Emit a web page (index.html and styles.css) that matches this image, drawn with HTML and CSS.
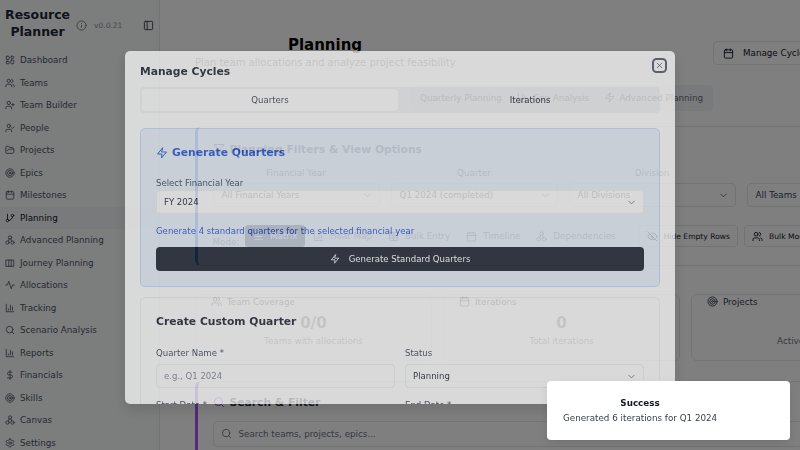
FILE: index.html
```html
<!DOCTYPE html>
<html lang="en">
<head>
<meta charset="utf-8">
<title>Resource Planner</title>
<link rel="stylesheet" href="styles.css">
</head>
<body>
<svg class="defs" xmlns="http://www.w3.org/2000/svg">
<symbol id="dash" viewBox="0 0 24 24"><rect x="3" y="3" width="7" height="8" rx="1.5"/><rect x="14" y="3" width="7" height="5" rx="1.5"/><rect x="14" y="12" width="7" height="9" rx="1.5"/><rect x="3" y="15" width="7" height="6" rx="1.5"/></symbol>
<symbol id="users" viewBox="0 0 24 24"><path d="M16 21v-2a4 4 0 0 0-4-4H6a4 4 0 0 0-4 4v2"/><circle cx="9" cy="7" r="4"/><path d="M22 21v-2a4 4 0 0 0-3-3.87"/><path d="M16 3.13a4 4 0 0 1 0 7.75"/></symbol>
<symbol id="uplus" viewBox="0 0 24 24"><path d="M16 21v-2a4 4 0 0 0-4-4H6a4 4 0 0 0-4 4v2"/><circle cx="9" cy="7" r="4"/><path d="M19 8v6M22 11h-6"/></symbol>
<symbol id="ucheck" viewBox="0 0 24 24"><path d="M16 21v-2a4 4 0 0 0-4-4H6a4 4 0 0 0-4 4v2"/><circle cx="9" cy="7" r="4"/><path d="m16 11 2 2 4-4"/></symbol>
<symbol id="folder" viewBox="0 0 24 24"><path d="m6 14 1.5-2.9A2 2 0 0 1 9.24 10H20a2 2 0 0 1 1.94 2.5l-1.54 6a2 2 0 0 1-1.95 1.5H4a2 2 0 0 1-2-2V5a2 2 0 0 1 2-2h3.9a2 2 0 0 1 1.69.9l.81 1.2a2 2 0 0 0 1.67.9H18a2 2 0 0 1 2 2v2"/></symbol>
<symbol id="target" viewBox="0 0 24 24"><circle cx="12" cy="12" r="10"/><circle cx="12" cy="12" r="6"/><circle cx="12" cy="12" r="2"/></symbol>
<symbol id="cal" viewBox="0 0 24 24"><rect x="3" y="4" width="18" height="18" rx="2"/><path d="M16 2v4M8 2v4M3 10h18"/></symbol>
<symbol id="branch" viewBox="0 0 24 24"><path d="M6 3v12"/><circle cx="18" cy="6" r="3"/><circle cx="6" cy="18" r="3"/><path d="M18 9a9 9 0 0 1-9 9"/></symbol>
<symbol id="net" viewBox="0 0 24 24"><circle cx="12" cy="6" r="4"/><circle cx="6" cy="18" r="4"/><circle cx="18" cy="18" r="4"/><path d="m10 9.500-2 5M14 9.500l2 5"/></symbol>
<symbol id="map" viewBox="0 0 24 24"><path d="M3 5h18v15H3zM9 5v15M15 5v15"/></symbol>
<symbol id="act" viewBox="0 0 24 24"><path d="M22 12h-4l-3 9L9 3l-3 9H2"/></symbol>
<symbol id="bars" viewBox="0 0 24 24"><path d="M3 3v18h18M18 17V9M13 17V5M8 17v-3"/></symbol>
<symbol id="search" viewBox="0 0 24 24"><circle cx="11" cy="11" r="8"/><path d="m21 21-4.300-4.300"/></symbol>
<symbol id="dollar" viewBox="0 0 24 24"><path d="M12 1v22M17 5H9.500a3.500 3.500 0 0 0 0 7h5a3.500 3.500 0 0 1 0 7H6"/></symbol>
<symbol id="gear" viewBox="0 0 24 24"><path d="M12.220 2h-.44a2 2 0 0 0-2 2v.18a2 2 0 0 1-1 1.730l-.43.250a2 2 0 0 1-2 0l-.15-.08a2 2 0 0 0-2.730.730l-.22.380a2 2 0 0 0 .730 2.730l.15.100a2 2 0 0 1 1 1.720v.510a2 2 0 0 1-1 1.740l-.15.090a2 2 0 0 0-.730 2.730l.22.380a2 2 0 0 0 2.730.730l.15-.08a2 2 0 0 1 2 0l.43.250a2 2 0 0 1 1 1.730V20a2 2 0 0 0 2 2h.44a2 2 0 0 0 2-2v-.18a2 2 0 0 1 1-1.730l.43-.25a2 2 0 0 1 2 0l.15.080a2 2 0 0 0 2.730-.730l.22-.390a2 2 0 0 0-.730-2.730l-.15-.08a2 2 0 0 1-1-1.740v-.5a2 2 0 0 1 1-1.740l.15-.09a2 2 0 0 0 .730-2.730l-.22-.38a2 2 0 0 0-2.730-.730l-.15.080a2 2 0 0 1-2 0l-.43-.25a2 2 0 0 1-1-1.730V4a2 2 0 0 0-2-2z"/><circle cx="12" cy="12" r="3"/></symbol>
<symbol id="info" viewBox="0 0 24 24"><circle cx="12" cy="12" r="10"/><path d="M12 16v-4M12 8h.01"/></symbol>
<symbol id="panel" viewBox="0 0 24 24"><rect x="3" y="3" width="18" height="18" rx="2"/><path d="M9 3v18"/></symbol>
<symbol id="zap" viewBox="0 0 24 24"><path d="M13 2 3 14h9l-1 8 10-12h-9z"/></symbol>
<symbol id="x" viewBox="0 0 24 24"><path d="M18 6 6 18M6 6l12 12"/></symbol>
<symbol id="chev" viewBox="0 0 24 24"><path d="m6 9 6 6 6-6"/></symbol>
<symbol id="filter" viewBox="0 0 24 24"><path d="M22 3H2l8 9.460V19l4 2v-8.540z"/></symbol>
<symbol id="eyeoff" viewBox="0 0 24 24"><path d="M9.880 9.880a3 3 0 1 0 4.240 4.240M10.730 5.080A10.430 10.430 0 0 1 12 5c7 0 10 7 10 7a13.160 13.160 0 0 1-1.670 2.680M6.610 6.610A13.526 13.526 0 0 0 2 12s3 7 10 7a9.740 9.740 0 0 0 5.390-1.610M2 2l20 20"/></symbol>
<symbol id="menu" viewBox="0 0 24 24"><path d="M4 6h16M4 12h16M4 18h16"/></symbol>
<symbol id="table" viewBox="0 0 24 24"><rect x="3" y="3" width="18" height="18" rx="2"/><path d="M3 9h18M3 15h18M12 3v18"/></symbol>
</svg>

<div class="page">
  <aside class="sidebar">
    <div class="brand">
      <div class="brand-name">Resource Planner</div>
      <svg class="ic brand-info"><use href="#info"/></svg>
      <span class="version">v0.0.21</span>
      <svg class="ic brand-toggle"><use href="#panel"/></svg>
    </div>
    <nav class="nav">
      <a class="nav-item"><svg class="ic"><use href="#dash"/></svg>Dashboard</a>
      <a class="nav-item"><svg class="ic"><use href="#users"/></svg>Teams</a>
      <a class="nav-item"><svg class="ic"><use href="#uplus"/></svg>Team Builder</a>
      <a class="nav-item"><svg class="ic"><use href="#ucheck"/></svg>People</a>
      <a class="nav-item"><svg class="ic"><use href="#folder"/></svg>Projects</a>
      <a class="nav-item"><svg class="ic"><use href="#target"/></svg>Epics</a>
      <a class="nav-item"><svg class="ic"><use href="#cal"/></svg>Milestones</a>
      <a class="nav-item active"><svg class="ic"><use href="#branch"/></svg>Planning</a>
      <a class="nav-item"><svg class="ic"><use href="#net"/></svg>Advanced Planning</a>
      <a class="nav-item"><svg class="ic"><use href="#map"/></svg>Journey Planning</a>
      <a class="nav-item"><svg class="ic"><use href="#act"/></svg>Allocations</a>
      <a class="nav-item"><svg class="ic"><use href="#bars"/></svg>Tracking</a>
      <a class="nav-item"><svg class="ic"><use href="#search"/></svg>Scenario Analysis</a>
      <a class="nav-item"><svg class="ic"><use href="#bars"/></svg>Reports</a>
      <a class="nav-item"><svg class="ic"><use href="#dollar"/></svg>Financials</a>
      <a class="nav-item"><svg class="ic"><use href="#target"/></svg>Skills</a>
      <a class="nav-item"><svg class="ic"><use href="#net"/></svg>Canvas</a>
      <a class="nav-item"><svg class="ic"><use href="#gear"/></svg>Settings</a>
    </nav>
  </aside>

  <main class="main">
    <header class="head">
      <div class="head-text">
        <h1 class="page-title">Planning</h1>
        <p class="page-sub">Plan team allocations and analyze project feasibility</p>
      </div>
      <button class="btn head-btn"><svg class="ic"><use href="#cal"/></svg>Manage Cycles</button>
    </header>

    <div class="tabs">
      <span class="tab">Quarterly Planning</span>
      <span class="tab"><svg class="ic"><use href="#bars"/></svg>Gap Analysis</span>
      <span class="tab"><svg class="ic"><use href="#zap"/></svg>Advanced Planning</span>
    </div>

    <section class="panel panel-blue">
      <h2 class="panel-title filters-title"><svg class="ic"><use href="#filter"/></svg>Planning Filters &amp; View Options</h2>
      <div class="filters">
        <div class="filter"><span class="filter-label">Financial Year</span><div class="select"><span>All Financial Years</span><svg class="ic chev"><use href="#chev"/></svg></div></div>
        <div class="filter"><span class="filter-label">Quarter</span><div class="select"><span>Q1 2024 (completed)</span><svg class="ic chev"><use href="#chev"/></svg></div></div>
        <div class="filter"><span class="filter-label">Division</span><div class="select"><span>All Divisions</span><svg class="ic chev"><use href="#chev"/></svg></div></div>
        <div class="filter"><span class="filter-label"></span><div class="select"><span>All Teams</span><svg class="ic chev"><use href="#chev"/></svg></div></div>
      </div>
      <div class="modes">
        <span class="mode-label">Mode:</span>
        <span class="mode on"><svg class="ic"><use href="#menu"/></svg>Matrix</span>
        <span class="mode"><svg class="ic"><use href="#bars"/></svg>Heat Map</span>
        <span class="mode"><svg class="ic"><use href="#table"/></svg>Bulk Entry</span>
        <span class="mode"><svg class="ic"><use href="#cal"/></svg>Timeline</span>
        <span class="mode"><svg class="ic"><use href="#net"/></svg>Dependencies</span>
        <span class="btn mode-btn first"><svg class="ic"><use href="#eyeoff"/></svg>Hide Empty Rows</span>
        <span class="btn mode-btn"><svg class="ic"><use href="#users"/></svg>Bulk Mode</span>
      </div>
    </section>

    <div class="stats">
      <div class="stat"><div class="stat-head"><svg class="ic"><use href="#users"/></svg>Team Coverage</div><div class="stat-num">0/0</div><div class="stat-sub">Teams with allocations</div></div>
      <div class="stat"><div class="stat-head"><svg class="ic"><use href="#cal"/></svg>Iterations</div><div class="stat-num">0</div><div class="stat-sub">Total iterations</div></div>
      <div class="stat"><div class="stat-head"><svg class="ic"><use href="#target"/></svg>Projects</div><div class="stat-num">&nbsp;</div><div class="stat-sub">Active projects</div></div>
    </div>

    <section class="panel panel-purple">
      <h2 class="panel-title"><svg class="ic search-ic"><use href="#search"/></svg>Search &amp; Filter</h2>
      <div class="search"><svg class="ic"><use href="#search"/></svg>Search teams, projects, epics...</div>
    </section>
  </main>
</div>

<div class="overlay"></div>

<div class="modal" role="dialog">
  <h2 class="modal-title">Manage Cycles</h2>
  <button class="modal-close"><svg class="ic"><use href="#x"/></svg></button>
  <div class="seg">
    <span class="seg-item on">Quarters</span>
    <span class="seg-item dark">Iterations</span>
  </div>
  <section class="mcard mcard-blue">
    <h3 class="mcard-title blue"><svg class="ic"><use href="#zap"/></svg>Generate Quarters</h3>
    <label class="mlabel">Select Financial Year</label>
    <div class="mfield"><span>FY 2024</span><svg class="ic chev"><use href="#chev"/></svg></div>
    <p class="mhelp">Generate 4 standard quarters for the selected financial year</p>
    <button class="mprimary"><svg class="ic"><use href="#zap"/></svg>Generate Standard Quarters</button>
  </section>
  <section class="mcard mcard-plain">
    <h3 class="mcard-title">Create Custom Quarter</h3>
    <div class="mgrid">
      <div><label class="mlabel">Quarter Name *</label><div class="mfield ph">e.g., Q1 2024</div></div>
      <div><label class="mlabel">Status</label><div class="mfield"><span>Planning</span><svg class="ic chev"><use href="#chev"/></svg></div></div>
      <div><label class="mlabel">Start Date *</label></div>
      <div><label class="mlabel">End Date *</label></div>
    </div>
  </section>
</div>

<div class="toast" role="status">
  <div class="toast-title">Success</div>
  <div class="toast-msg">Generated 6 iterations for Q1 2024</div>
</div>
</body>
</html>
```

FILE: styles.css
```css
* { box-sizing: border-box; }
html, body { margin: 0; height: 100%; overflow: hidden; }
body { font-family: "DejaVu Sans", sans-serif; font-size: 8.75px; color: #111827; background: #fff; }
.defs { display: none; }
.ic { width: 11px; height: 11px; flex: none; fill: none; stroke: currentColor; stroke-width: 2; stroke-linecap: round; stroke-linejoin: round; }
h1, h2, h3, p { margin: 0; }
button { font: inherit; color: inherit; background: none; border: 0; padding: 0; }

.page { display: flex; width: 800px; height: 450px; overflow: hidden; }

.sidebar { width: 160px; flex: none; background: #f9fafb; border-right: 1px solid #e5e7eb; overflow: hidden; }
.brand { display: flex; align-items: center; height: 49px; padding: 0 5px 4px; }
.brand-name { width: 66px; font-size: 12.5px; line-height: 17px; font-weight: 700; text-align: center; color: #1f2937; }
.brand-info { margin: 5px 0 0 6px; color: #6b7280; stroke-width: 1.8; }
.version { margin: 5px 0 0 7px; font-size: 7.500px; color: #8a93a0; }
.brand-toggle { margin: 5px 0 0 21px; color: #374151; }
.nav-item { display: flex; align-items: center; gap: 5px; height: 22.500px; padding-left: 5px; color: #4b5563; }
.nav-item .ic { width: 10px; height: 10px; }
.nav-item.active { background: #f3f4f6; color: #111827; }

.main { flex: 1; min-width: 0; padding-left: 35px; overflow: hidden; }
.head { display: flex; width: 620px; padding-top: 36px; }
.head-text { width: 260px; text-align: center; }
.page-title { font-size: 15px; line-height: 18px; font-weight: 700; color: #000; }
.page-sub { margin-top: 1px; font-size: 10px; line-height: 16px; color: #6b7280; white-space: nowrap; }
.btn { display: inline-flex; align-items: center; gap: 9px; border: 1px solid #e5e7eb; border-radius: 4px; background: #fff; white-space: nowrap; color: #111827; }
.head-btn { margin: 5px 0 0 auto; width: 102px; height: 24px; padding-left: 9px; }

.tabs { display: flex; align-items: center; gap: 15.500px; width: 303px; height: 26px; margin: 13.500px 0 0 215px; padding-left: 10px; background: #f3f4f6; border-radius: 4px; color: #6b7280; white-space: nowrap; }
.tab { display: inline-flex; align-items: center; gap: 4px; }

.panel { width: 640px; background: #fff; border: 1px solid #e5e7eb; border-right: 0; border-left-width: 3px; border-radius: 6px 0 0 6px; }
.panel-blue { height: 140px; margin-top: 15px; padding: 15px 0 0 14.500px; border-left-color: #3b82f6; }
.panel-purple { height: 80px; margin-top: 20px; padding: 13px 0 0 14.500px; border-left-color: #a855f7; }
.panel-title { display: flex; align-items: center; gap: 5px; font-size: 10.750px; line-height: 15px; font-weight: 700; color: #1f2937; }
.filters-title { color: #6b7280; }
.panel-title .ic { width: 12px; height: 12px; }
.search-ic { color: #7c3aed; }

.filters { display: grid; grid-template-columns: 167px 167px 167px 100px; gap: 0 11px; margin-top: 9.500px; }
.filter { min-width: 0; text-align: center; }
.filter-label { display: block; height: 14px; line-height: 14px; color: #6b7280; }
.select { display: flex; align-items: center; justify-content: space-between; height: 24px; margin-top: 3px; padding: 0 6px 0 8px; border: 1px solid #e5e7eb; border-radius: 4px; color: #374151; white-space: nowrap; }
.chev { color: #6b7280; }

.modes { display: flex; align-items: center; height: 22px; margin-top: 18px; color: #6b7280; white-space: nowrap; }
.mode-label { flex: none; align-self: flex-end; width: 32.500px; line-height: 10px; }
.mode { flex: none; display: inline-flex; align-items: center; gap: 6px; height: 22px; padding: 0 8px; border-radius: 3px; }
.mode.on { width: 60px; background: #374151; color: #fff; }
.mode-btn { flex: none; height: 22px; gap: 6px; padding: 0 7px; margin-right: 6px; font-size: 7.600px; }
.mode-btn.first { margin-left: 15px; }

.stats { display: grid; grid-template-columns: 237px 237px 237px; gap: 11px; width: 640px; margin-top: 28px; }
.stat { height: 67px; padding: 1px 0 0; border: 1px solid #e5e7eb; border-radius: 6px; text-align: center; }
.stat-head { display: flex; align-items: center; gap: 5px; height: 12px; padding-left: 15px; color: #374151; }
.stat-num { margin-top: 5px; font-size: 15px; line-height: 20px; font-weight: 700; color: #6b7280; }
.stat-sub { margin-top: 1px; line-height: 14px; color: #6b7280; white-space: nowrap; }

.search { display: flex; align-items: center; gap: 7px; height: 26px; margin-top: 11px; padding-left: 7px; border: 1px solid #e5e7eb; border-radius: 4px; color: #6b7280; }

.overlay { position: fixed; inset: 0; background: rgba(0, 0, 0, .5); }

.modal { position: fixed; left: 125px; top: 51px; width: 550px; height: 353px; padding: 14px 15px 0; overflow: hidden; font-size: 8.550px; background: #fff; border-radius: 5px; opacity: .7; box-shadow: 0 6px 14px rgba(0, 0, 0, .18); }
.modal-title { font-size: 10.750px; line-height: 13px; font-weight: 700; color: #111827; }
.modal-close { position: absolute; left: 527px; top: 7px; display: flex; align-items: center; justify-content: center; width: 15px; height: 15px; border: 2px solid #4b5563; border-radius: 4.500px; color: #374151; }
.modal-close .ic { width: 9px; height: 9px; }
.seg { display: grid; grid-template-columns: 1fr 1fr; gap: 4px; height: 26px; margin-top: 9px; padding: 2px; background: #f3f4f6; border-radius: 4px; }
.seg-item { display: flex; align-items: center; justify-content: center; border-radius: 3px; color: #374151; }
.seg-item.dark { color: #111827; }
.seg-item.on { background: #fff; }
.mcard { padding: 17px 15px 0; border: 1px solid #eceef1; border-radius: 5px; }
.mcard-blue { height: 159px; margin-top: 15px; background: #e9f1fd; border-color: #bfdbfe; }
.mcard-plain { margin-top: 10px; }
.mcard-title { display: flex; align-items: center; gap: 4px; font-size: 10.750px; line-height: 14px; font-weight: 700; color: #111827; }
.mcard-title.blue { color: #1d4ed8; }
.mcard-title .ic { width: 12px; height: 12px; }
.mlabel { display: block; line-height: 12px; color: #374151; }
.mcard-blue .mlabel { margin-top: 17px; }
.mfield { display: flex; align-items: center; justify-content: space-between; height: 24px; margin-top: 1px; padding: 0 6px 0 7px; background: #fff; border: 1px solid #eceef1; border-radius: 4px; color: #111827; }
.mfield.ph { color: #7b828f; }
.mhelp { margin-top: 11px; line-height: 12px; color: #1d4ed8; }
.mprimary { display: flex; align-items: center; justify-content: center; gap: 9px; width: 100%; height: 24px; margin-top: 10px; background: #111827; border-radius: 4px; color: #fff; }
.mprimary .ic { width: 10px; height: 10px; }
.mgrid { display: grid; grid-template-columns: 239px 239px; gap: 11px 10px; margin-top: 18px; }
.mgrid .mfield { margin-top: 5px; }

.toast { position: fixed; left: 547px; top: 381px; width: 243px; height: 59px; padding: 16px 16px 0; background: #fff; border-radius: 4px; box-shadow: 0 4px 10px rgba(0, 0, 0, .1); }
.toast-title { width: 154px; line-height: 12px; font-weight: 700; text-align: center; color: #111827; }
.toast-msg { margin-top: 3px; line-height: 12px; color: #374151; white-space: nowrap; }
```
